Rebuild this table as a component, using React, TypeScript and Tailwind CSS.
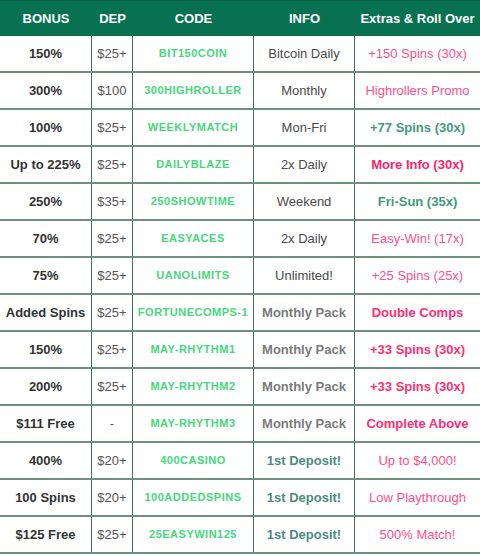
import React from "react";

type Row = {
  bonus: string;
  dep: string;
  code: string;
  info: string;
  infoCls: string;
  extra: string;
  extraCls: string;
};

const pink = "text-[#ff4f8b]";
const pinkB = "text-[#ff2f74] font-bold";
const teal = "text-[#3f9a7e] font-bold";
const infoN = "text-[#4a4a4a] ";
const infoMP = "text-[#7a7a7a] font-bold";
const infoDep = "text-[#4d8a80] font-bold";

const rows: Row[] = [
  { bonus: "150%", dep: "$25+", code: "BIT150COIN", info: "Bitcoin Daily", infoCls: infoN, extra: "+150 Spins (30x)", extraCls: pink },
  { bonus: "300%", dep: "$100", code: "300HIGHROLLER", info: "Monthly", infoCls: infoN, extra: "Highrollers Promo", extraCls: pink },
  { bonus: "100%", dep: "$25+", code: "WEEKLYMATCH", info: "Mon-Fri", infoCls: infoN, extra: "+77 Spins (30x)", extraCls: teal },
  { bonus: "Up to 225%", dep: "$25+", code: "DAILYBLAZE", info: "2x Daily", infoCls: infoN, extra: "More Info (30x)", extraCls: "text-[#ff1f6a] font-bold" },
  { bonus: "250%", dep: "$35+", code: "250SHOWTIME", info: "Weekend", infoCls: infoN, extra: "Fri-Sun (35x)", extraCls: teal },
  { bonus: "70%", dep: "$25+", code: "EASYACES", info: "2x Daily", infoCls: infoN, extra: "Easy-Win! (17x)", extraCls: pink },
  { bonus: "75%", dep: "$25+", code: "UANOLIMITS", info: "Unlimited!", infoCls: infoN, extra: "+25 Spins (25x)", extraCls: pink },
  { bonus: "Added Spins", dep: "$25+", code: "FORTUNECOMPS-1", info: "Monthly Pack", infoCls: infoMP, extra: "Double Comps", extraCls: pinkB },
  { bonus: "150%", dep: "$25+", code: "MAY-RHYTHM1", info: "Monthly Pack", infoCls: infoMP, extra: "+33 Spins (30x)", extraCls: pinkB },
  { bonus: "200%", dep: "$25+", code: "MAY-RHYTHM2", info: "Monthly Pack", infoCls: infoMP, extra: "+33 Spins (30x)", extraCls: pinkB },
  { bonus: "$111 Free", dep: "-", code: "MAY-RHYTHM3", info: "Monthly Pack", infoCls: infoMP, extra: "Complete Above", extraCls: pinkB },
  { bonus: "400%", dep: "$20+", code: "400CASINO", info: "1st Deposit!", infoCls: infoDep, extra: "Up to $4,000!", extraCls: pink },
  { bonus: "100 Spins", dep: "$20+", code: "100ADDEDSPINS", info: "1st Deposit!", infoCls: infoDep, extra: "Low Playthrough", extraCls: pink },
  { bonus: "$125 Free", dep: "$25+", code: "25EASYWIN125", info: "1st Deposit!", infoCls: infoDep, extra: "500% Match!", extraCls: pink },
];

const cols = "grid grid-cols-[92px_41px_121px_101px_125px]";

export default function App() {
  return (
    <div className="w-[480px] h-[555px] bg-white font-['Liberation_Sans',Arial,sans-serif] text-[13px] leading-none">
      <div className={`${cols} h-[36px] bg-[#087150] text-white font-bold text-[13px] border-t border-[#0a5e43]`}>
        <div className="flex items-center justify-center">BONUS</div>
        <div className="flex items-center justify-center">DEP</div>
        <div className="flex items-center justify-center">CODE</div>
        <div className="flex items-center justify-center">INFO</div>
        <div className="flex items-center justify-center whitespace-nowrap">Extras &amp; Roll Over</div>
      </div>
      {rows.map((r, i) => (
        <div key={i} className={`${cols} h-[37px] border-b-2 border-[#6c927f]`}>
          <div className="flex items-center justify-center border-r border-[#3f6e58] font-bold text-[#333] whitespace-nowrap">{r.bonus}</div>
          <div className="flex items-center justify-center border-r border-[#3f6e58] text-[#555]">{r.dep}</div>
          <div className="flex items-center justify-center border-r border-[#3f6e58] font-bold text-[11px] tracking-[0.5px] text-[#45d87c] whitespace-nowrap">{r.code}</div>
          <div className={`flex items-center justify-center border-r border-[#3f6e58] whitespace-nowrap ${r.infoCls}`}>{r.info}</div>
          <div className={`flex items-center justify-center whitespace-nowrap ${r.extraCls}`}>{r.extra}</div>
        </div>
      ))}
    </div>
  );
}
